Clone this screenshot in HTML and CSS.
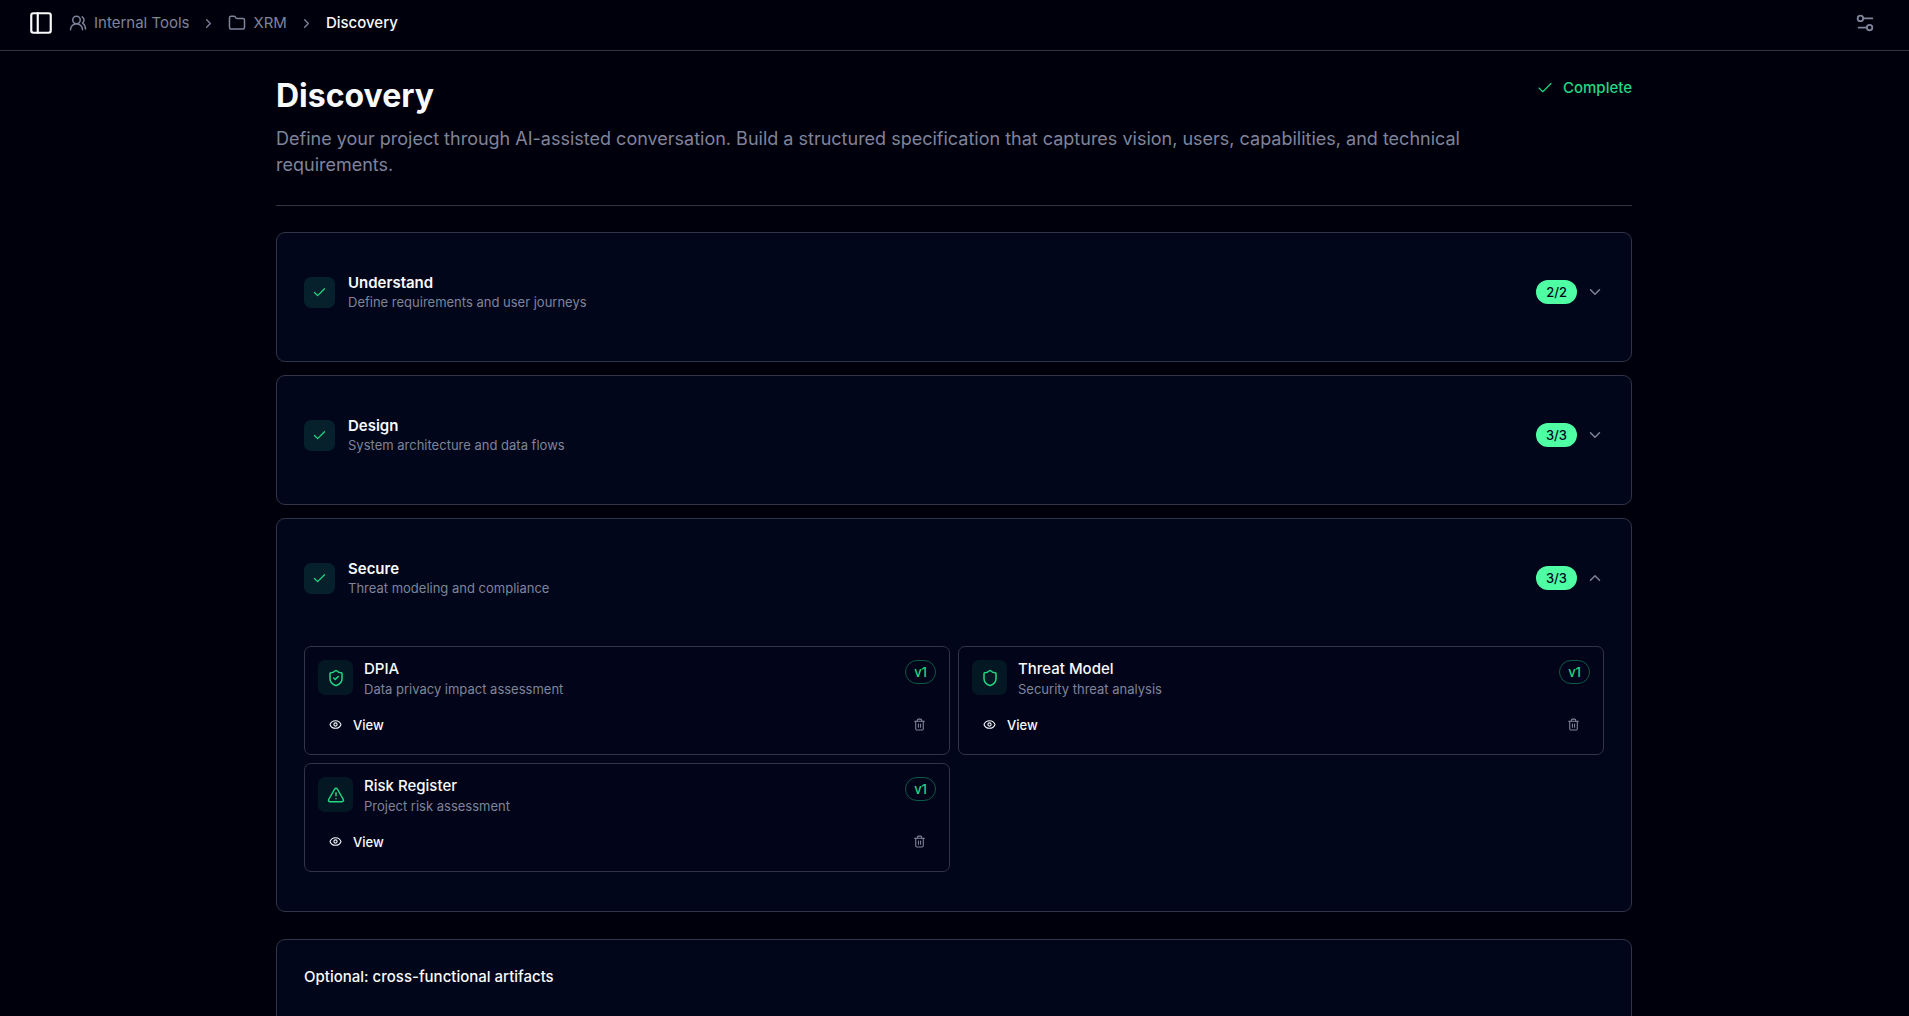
FILE: index.html
```html
<!DOCTYPE html>
<html lang="en">

<head>
    <meta charset="UTF-8">
    <meta name="viewport" content="width=device-width, initial-scale=1.0">
    <title>Discovery - XRM</title>
    <link rel="stylesheet" href="styles.css">
</head>

<body>
    <!-- Shared icons -->
    <svg class="sprite" aria-hidden="true">
        <symbol id="check" viewBox="0 0 24 24"><path d="M20 6 9 17l-5-5" /></symbol>
        <symbol id="chevron-right" viewBox="0 0 24 24"><path d="m9 18 6-6-6-6" /></symbol>
        <symbol id="chevron-down" viewBox="0 0 24 24"><path d="m6 9 6 6 6-6" /></symbol>
        <symbol id="chevron-up" viewBox="0 0 24 24"><path d="m18 15-6-6-6 6" /></symbol>
        <symbol id="eye" viewBox="0 0 24 24">
            <path d="M2.062 12.348a1 1 0 0 1 0-.696 10.75 10.75 0 0 1 19.876 0 1 1 0 0 1 0 .696 10.75 10.75 0 0 1-19.876 0" />
            <circle cx="12" cy="12" r="3" />
        </symbol>
        <symbol id="trash" viewBox="0 0 24 24">
            <path d="M3 6h18" />
            <path d="M19 6v14a2 2 0 0 1-2 2H7a2 2 0 0 1-2-2V6" />
            <path d="M8 6V4a2 2 0 0 1 2-2h4a2 2 0 0 1 2 2v2" />
            <path d="M10 11v6M14 11v6" />
        </symbol>
    </svg>

    <header class="topbar">
        <button class="icon-button" type="button" aria-label="Toggle sidebar">
            <svg class="icon icon-lg" viewBox="0 0 24 24">
                <rect x="3" y="3" width="18" height="18" rx="2" />
                <path d="M9 3v18" />
            </svg>
        </button>
        <nav class="breadcrumb" aria-label="Breadcrumb">
            <a href="#">
                <svg class="icon" viewBox="0 0 24 24">
                    <path d="M18 21a8 8 0 0 0-16 0" />
                    <circle cx="10" cy="8" r="5" />
                    <path d="M22 20c0-3.37-2-6.5-4-8a5 5 0 0 0-.45-8.3" />
                </svg>
                Internal Tools
            </a>
            <svg class="icon icon-sm"><use href="#chevron-right" /></svg>
            <a href="#">
                <svg class="icon" viewBox="0 0 24 24">
                    <path d="M20 20a2 2 0 0 0 2-2V8a2 2 0 0 0-2-2h-7.9a2 2 0 0 1-1.69-.9L9.6 3.9A2 2 0 0 0 7.93 3H4a2 2 0 0 0-2 2v13a2 2 0 0 0 2 2Z" />
                </svg>
                XRM
            </a>
            <svg class="icon icon-sm"><use href="#chevron-right" /></svg>
            <span class="current">Discovery</span>
        </nav>
        <button class="icon-button settings" type="button" aria-label="Settings">
            <svg class="icon icon-md" viewBox="0 0 24 24">
                <path d="M20 7h-9M14 17H5" />
                <circle cx="17" cy="17" r="3" />
                <circle cx="7" cy="7" r="3" />
            </svg>
        </button>
    </header>

    <main>
        <div class="container">
            <div class="page-header">
                <div class="page-intro">
                    <h1>Discovery</h1>
                    <p>Define your project through AI-assisted conversation. Build a structured specification that captures vision, users, capabilities, and technical requirements.</p>
                </div>
                <div class="status">
                    <svg class="icon thin"><use href="#check" /></svg>
                    Complete
                </div>
            </div>

            <div class="phases">
                <section class="card">
                    <button class="phase" type="button" aria-expanded="false">
                        <span class="tile"><svg class="icon icon-sm"><use href="#check" /></svg></span>
                        <span class="phase-text">
                            <span class="name">Understand</span>
                            <span class="hint">Define requirements and user journeys</span>
                        </span>
                        <span class="badge">2/2</span>
                        <svg class="icon chevron"><use href="#chevron-down" /></svg>
                    </button>
                </section>

                <section class="card">
                    <button class="phase" type="button" aria-expanded="false">
                        <span class="tile"><svg class="icon icon-sm"><use href="#check" /></svg></span>
                        <span class="phase-text">
                            <span class="name">Design</span>
                            <span class="hint">System architecture and data flows</span>
                        </span>
                        <span class="badge">3/3</span>
                        <svg class="icon chevron"><use href="#chevron-down" /></svg>
                    </button>
                </section>

                <section class="card">
                    <button class="phase" type="button" aria-expanded="true">
                        <span class="tile"><svg class="icon icon-sm"><use href="#check" /></svg></span>
                        <span class="phase-text">
                            <span class="name">Secure</span>
                            <span class="hint">Threat modeling and compliance</span>
                        </span>
                        <span class="badge">3/3</span>
                        <svg class="icon chevron"><use href="#chevron-up" /></svg>
                    </button>

                    <div class="artifacts">
                        <article class="artifact">
                            <div class="artifact-head">
                                <span class="tile tile-lg">
                                    <svg class="icon" viewBox="0 0 24 24">
                                        <path d="M20 13c0 5-3.5 7.5-7.66 8.95a1 1 0 0 1-.67-.01C7.5 20.5 4 18 4 13V6a1 1 0 0 1 1-1c2 0 4.5-1.2 6.24-2.72a1.17 1.17 0 0 1 1.52 0C14.51 3.81 17 5 19 5a1 1 0 0 1 1 1z" />
                                        <path d="m9 12 2 2 4-4" />
                                    </svg>
                                </span>
                                <div class="artifact-text">
                                    <h3>DPIA</h3>
                                    <p class="hint">Data privacy impact assessment</p>
                                </div>
                                <span class="version">v1</span>
                            </div>
                            <div class="actions">
                                <button class="view" type="button"><svg class="icon icon-xs"><use href="#eye" /></svg>View</button>
                                <button class="delete" type="button" aria-label="Delete DPIA"><svg class="icon icon-xs"><use href="#trash" /></svg></button>
                            </div>
                        </article>

                        <article class="artifact">
                            <div class="artifact-head">
                                <span class="tile tile-lg">
                                    <svg class="icon" viewBox="0 0 24 24">
                                        <path d="M20 13c0 5-3.5 7.5-7.66 8.95a1 1 0 0 1-.67-.01C7.5 20.5 4 18 4 13V6a1 1 0 0 1 1-1c2 0 4.5-1.2 6.24-2.72a1.17 1.17 0 0 1 1.52 0C14.51 3.81 17 5 19 5a1 1 0 0 1 1 1z" />
                                    </svg>
                                </span>
                                <div class="artifact-text">
                                    <h3>Threat Model</h3>
                                    <p class="hint">Security threat analysis</p>
                                </div>
                                <span class="version">v1</span>
                            </div>
                            <div class="actions">
                                <button class="view" type="button"><svg class="icon icon-xs"><use href="#eye" /></svg>View</button>
                                <button class="delete" type="button" aria-label="Delete Threat Model"><svg class="icon icon-xs"><use href="#trash" /></svg></button>
                            </div>
                        </article>

                        <article class="artifact">
                            <div class="artifact-head">
                                <span class="tile tile-lg">
                                    <svg class="icon" viewBox="0 0 24 24">
                                        <path d="m21.73 18-8-14a2 2 0 0 0-3.48 0l-8 14A2 2 0 0 0 4 21h16a2 2 0 0 0 1.73-3" />
                                        <path d="M12 9v4M12 17h.01" />
                                    </svg>
                                </span>
                                <div class="artifact-text">
                                    <h3>Risk Register</h3>
                                    <p class="hint">Project risk assessment</p>
                                </div>
                                <span class="version">v1</span>
                            </div>
                            <div class="actions">
                                <button class="view" type="button"><svg class="icon icon-xs"><use href="#eye" /></svg>View</button>
                                <button class="delete" type="button" aria-label="Delete Risk Register"><svg class="icon icon-xs"><use href="#trash" /></svg></button>
                            </div>
                        </article>
                    </div>
                </section>
            </div>

            <section class="card optional">
                <h2>Optional: cross-functional artifacts</h2>
            </section>
        </div>
    </main>
</body>

</html>
```
FILE: styles.css
```css
:root {
    --bg: #00000c;
    --card: #02061a;
    --border: #323447;
    --text: #f8fafc;
    --muted: #7f849a;
    --green: #22d884;
}

* {
    box-sizing: border-box;
    margin: 0;
    padding: 0;
}

body {
    display: flex;
    flex-direction: column;
    height: 100vh;
    background-color: var(--bg);
    color: var(--text);
    font-family: Inter, sans-serif;
    font-size: 15px;
    line-height: 22px;
}

button {
    background: none;
    border: none;
    color: inherit;
    font: inherit;
    text-align: left;
    cursor: pointer;
}

a {
    color: inherit;
    text-decoration: none;
}

a:hover {
    color: var(--text);
}

.sprite {
    display: none;
}

/* Icons */
.icon {
    display: block;
    flex-shrink: 0;
    width: 18px;
    height: 18px;
    fill: none;
    stroke: currentColor;
    stroke-width: 2;
    stroke-linecap: round;
    stroke-linejoin: round;
}

.icon-xs {
    width: 13px;
    height: 13px;
}

.icon-sm {
    width: 15px;
    height: 15px;
}

.icon-md {
    width: 22px;
    height: 22px;
}

.icon-lg {
    width: 26px;
    height: 26px;
}

.thin {
    stroke-width: 1.5;
}

/* Top bar */
.topbar {
    display: flex;
    flex-shrink: 0;
    align-items: center;
    gap: 15px;
    padding: 10px 33px 14px 28px;
    border-bottom: 1px solid var(--border);
}

.breadcrumb {
    display: flex;
    align-items: center;
    gap: 12px;
    color: var(--muted);
}

.breadcrumb a {
    display: flex;
    align-items: center;
    gap: 7px;
}

.breadcrumb .current {
    color: var(--text);
    font-weight: 500;
}

.settings {
    margin-left: auto;
    color: var(--muted);
}

/* Page */
main {
    flex: 1;
    min-height: 0;
    overflow-y: auto;
    scrollbar-width: none;
}

.container {
    max-width: 1409px;
    margin: 0 auto;
    padding: 26px 27px 26px 26px;
}

.page-header {
    display: flex;
    align-items: flex-start;
    gap: 26px;
    margin-bottom: 26px;
    padding-bottom: 27px;
    border-bottom: 1px solid var(--border);
}

.page-intro {
    flex: 1;
}

h1 {
    margin-bottom: 11px;
    font-size: 32px;
    font-weight: 700;
    line-height: 38px;
}

.page-intro p {
    color: var(--muted);
    font-size: 18px;
    line-height: 26px;
}

.status {
    display: flex;
    align-items: center;
    gap: 9px;
    color: var(--green);
    font-weight: 500;
}

/* Phases */
.phases {
    display: flex;
    flex-direction: column;
    gap: 13px;
}

.card {
    padding: 40px 27px 39px;
    background-color: var(--card);
    border: 1px solid var(--border);
    border-radius: 9px;
}

.phase {
    display: flex;
    align-items: center;
    width: 100%;
    padding-bottom: 11px;
}

.tile {
    display: flex;
    flex-shrink: 0;
    align-items: center;
    justify-content: center;
    width: 31px;
    height: 31px;
    background-color: #06212b;
    border-radius: 7px;
    color: var(--green);
}

.tile-lg {
    width: 35px;
    height: 35px;
    background-color: #041824;
}

.phase-text {
    display: flex;
    flex: 1;
    flex-direction: column;
    margin-left: 13px;
}

.name {
    font-weight: 600;
    line-height: 20px;
}

.hint {
    color: var(--muted);
    font-size: 13px;
    line-height: 18px;
}

.badge {
    padding: 3px 10px;
    background-color: #4fffa4;
    border-radius: 12px;
    color: #02061a;
    font-size: 13px;
    font-weight: 500;
    line-height: 18px;
}

.chevron {
    margin-left: 9px;
    color: var(--muted);
}

/* Artifacts */
.artifacts {
    display: grid;
    grid-template-columns: 1fr 1fr;
    gap: 8px;
    margin-top: 38px;
}

.artifact {
    padding: 13px 13px 14px;
    background-color: #020419;
    border: 1px solid var(--border);
    border-radius: 7px;
}

.artifact-head {
    display: flex;
    align-items: flex-start;
    gap: 11px;
}

.artifact-text {
    flex: 1;
}

h3 {
    margin-bottom: 2px;
    font-size: 15px;
    font-weight: 500;
    line-height: 18px;
}

.version {
    padding: 2px 8px;
    border: 1px solid #0b5a45;
    border-radius: 12px;
    color: var(--green);
    font-size: 13px;
    font-weight: 500;
    line-height: 18px;
}

.actions {
    display: flex;
    justify-content: space-between;
    margin-top: 11px;
}

.view,
.delete {
    display: flex;
    align-items: center;
    height: 31px;
    border-radius: 7px;
}

.view {
    gap: 11px;
    padding: 0 11px;
    font-size: 13px;
    font-weight: 500;
}

.delete {
    padding: 0 10px;
    color: var(--muted);
}

.view:hover,
.delete:hover {
    background-color: #0d1328;
}

.optional {
    margin-top: 27px;
    padding-top: 26px;
}

h2 {
    font-size: 15px;
    font-weight: 500;
}
```
